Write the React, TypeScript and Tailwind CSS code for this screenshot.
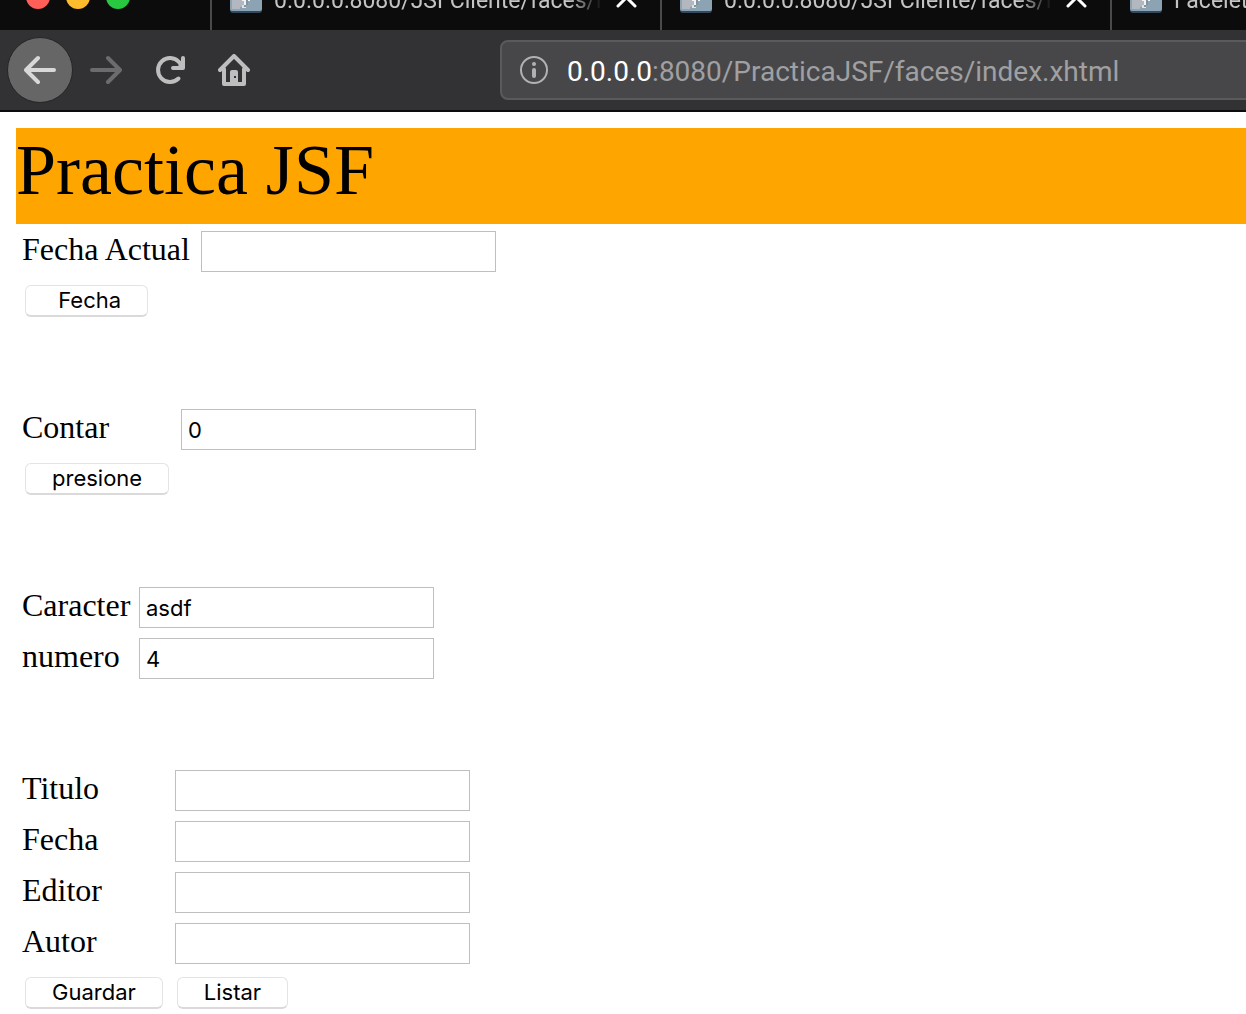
import type { ReactNode } from "react";

function Favicon() {
  return (
    <svg className="size-8 shrink-0" viewBox="0 0 32 32" aria-hidden="true">
      <rect width="32" height="32" rx="3" fill="#34495e" />
      <rect width="32" height="30" rx="2" fill="#8ba3b3" />
      <path d="M2 0h12v25l-4 1v2H2z" fill="#b3b8c0" />
      <path d="M12 8h8v12h-2v4h-4v-4h-2z" fill="#f1f3f4" />
      <path d="M12 24h4v3h-4z" fill="#dfe3e6" />
      <path d="M16 18h2v6h-2v2h-2v-2h2z" fill="#84949f" />
    </svg>
  );
}

function Tab({ title, closable = true }: { title: string; closable?: boolean }) {
  return (
    <div className="flex h-full w-[450px] shrink-0 items-center border-l-2 border-[#4a4a4b] pl-[18px] pr-[22px]">
      <Favicon />
      <span className="ml-3 w-[328px] overflow-hidden whitespace-nowrap pt-2 text-[23px] text-[#c4c4c5] mask-r-from-90% mask-r-to-100%">
        {title}
      </span>
      {closable && (
        <button type="button" aria-label="Cerrar" className="ml-3 text-white">
          <svg className="size-6" viewBox="0 0 24 24" fill="none" stroke="currentColor" strokeWidth="3" strokeLinecap="round">
            <path d="M4 4l17 17M21 4L4 21" />
          </svg>
        </button>
      )}
    </div>
  );
}

function BrowserChrome() {
  return (
    <header className="overflow-hidden bg-[#323234] font-[Roboto,sans-serif]">
      <div className="flex h-[30px] items-end overflow-hidden bg-[#0c0c0d]">
        <div className="flex h-[66px] shrink-0 items-center">
          <div className="flex w-[210px] gap-4 pl-[26px]">
            <span className="size-6 rounded-full bg-[#ff5f57]" />
            <span className="size-6 rounded-full bg-[#ffbd2e]" />
            <span className="size-6 rounded-full bg-[#28c940]" />
          </div>
          <Tab title="0.0.0.0:8080/JSFCliente/faces/index" />
          <Tab title="0.0.0.0:8080/JSFCliente/faces/index" />
          <Tab title="Facelet Title" closable={false} />
        </div>
      </div>
      <div className="flex h-[82px] items-center border-b-2 border-[#0c0c0d] pl-[7px] text-[#bebebf]">
        <button type="button" aria-label="Atrás" className="flex size-[66px] shrink-0 items-center justify-center rounded-full border border-[#252526] bg-[#666667] text-[#d8d8d8]">
          <svg className="size-8" viewBox="0 0 32 32" fill="none" stroke="currentColor" strokeWidth="4" strokeLinecap="round" strokeLinejoin="round">
            <path d="M30 16H3M14 4L2 16l12 12" />
          </svg>
        </button>
        <button type="button" aria-label="Adelante" className="ml-[17px] shrink-0 text-[#6c6c6e]">
          <svg className="size-8" viewBox="0 0 32 32" fill="none" stroke="currentColor" strokeWidth="4" strokeLinecap="round" strokeLinejoin="round">
            <path d="M2 16h27M18 4l12 12-12 12" />
          </svg>
        </button>
        <button type="button" aria-label="Recargar" className="ml-8 shrink-0">
          <svg className="size-8" viewBox="0 0 32 32" fill="none" stroke="currentColor" strokeWidth="4" strokeLinecap="round" strokeLinejoin="round">
            <path d="M24.500 24.500A12 12 0 1 1 25 8l3 4" />
            <path d="M29 4v10H19" />
            <path d="M29 7v7h-7z" fill="currentColor" stroke="none" />
          </svg>
        </button>
        <button type="button" aria-label="Inicio" className="ml-8 shrink-0">
          <svg className="size-8" viewBox="0 0 32 32" fill="none" stroke="currentColor" strokeWidth="4" strokeLinecap="round" strokeLinejoin="round">
            <path d="M2 16L16 2l14 14" />
            <path d="M6 15v15h20V15" />
            <path d="M12 30V18q0-2 2-2h4q2 0 2 2v12z" fill="currentColor" stroke="none" />
            <rect x="16" y="22" width="2" height="2" fill="#323234" stroke="none" />
          </svg>
        </button>
        <div className="-mr-2 ml-[250px] flex h-[60px] min-w-0 flex-1 items-center rounded-lg border-2 border-[#5a5a5c] bg-[#474749] pl-[18px] text-[28px]">
          <svg className="size-7 shrink-0" viewBox="0 0 28 28" aria-hidden="true">
            <circle cx="14" cy="14" r="13" fill="none" stroke="#b1b1b3" strokeWidth="2" />
            <circle cx="14" cy="8" r="2" fill="#b1b1b3" />
            <rect x="12" y="12" width="4" height="10" rx="2" fill="#b1b1b3" />
          </svg>
          <label htmlFor="url" className="ml-[19px] pt-1 text-white">0.0.0.0</label>
          <input id="url" defaultValue=":8080/PracticaJSF/faces/index.xhtml" className="min-w-0 flex-1 bg-transparent pt-1 text-[#a0a0a2] outline-none" />
        </div>
      </div>
    </header>
  );
}

function Field({ id, label, value = "" }: { id: string; label: string; value?: string }) {
  return (
    <>
      <label htmlFor={id} className="whitespace-nowrap">{label}</label>
      <input
        id={id}
        defaultValue={value}
        className="h-[41px] w-[295px] border border-[#bfbfbf] bg-white px-[6px] font-[Inter,sans-serif] text-[22px] outline-none"
      />
    </>
  );
}

function PushButton({ children }: { children: ReactNode }) {
  return (
    <button
      type="button"
      className="h-8 rounded-md border border-b-2 border-[#e4e4e4] border-b-[#dadada] bg-white px-[26px] pb-px font-[Inter,sans-serif] text-[22px] leading-7 whitespace-pre"
    >
      {children}
    </button>
  );
}

function ButtonRow({ children }: { children: ReactNode }) {
  return <div className="col-span-2 flex gap-[14px] pt-[3px] pb-px pl-[3px]">{children}</div>;
}

const formClass = "grid justify-start items-start gap-y-[10px] text-[32px] leading-9";

export default function App() {
  return (
    <div className="min-h-screen bg-white text-black">
      <BrowserChrome />
      <main className="pt-4 pl-4 font-['Liberation_Serif',serif]">
        <h1 className="h-24 bg-[#ffa500] text-[72px] leading-[84px]">Practica JSF</h1>
        <div className="flex flex-col gap-[91px] pt-[7px] pl-[6px]">
          <form className={formClass + " grid-cols-[179px_auto]"}>
            <Field id="fecha-actual" label="Fecha Actual" />
            <ButtonRow>
              <PushButton>{"\u00a0Fecha"}</PushButton>
            </ButtonRow>
          </form>
          <form className={formClass + " grid-cols-[159px_auto]"}>
            <Field id="contar" label="Contar" value="0" />
            <ButtonRow>
              <PushButton>presione</PushButton>
            </ButtonRow>
          </form>
          <form className={formClass + " grid-cols-[117px_auto]"}>
            <Field id="caracter" label="Caracter" value="asdf" />
            <Field id="numero" label="numero" value="4" />
          </form>
          <form className={formClass + " grid-cols-[153px_auto]"}>
            <Field id="titulo" label="Titulo" />
            <Field id="fecha" label="Fecha" />
            <Field id="editor" label="Editor" />
            <Field id="autor" label="Autor" />
            <ButtonRow>
              <PushButton>Guardar</PushButton>
              <PushButton>Listar</PushButton>
            </ButtonRow>
          </form>
        </div>
      </main>
    </div>
  );
}
